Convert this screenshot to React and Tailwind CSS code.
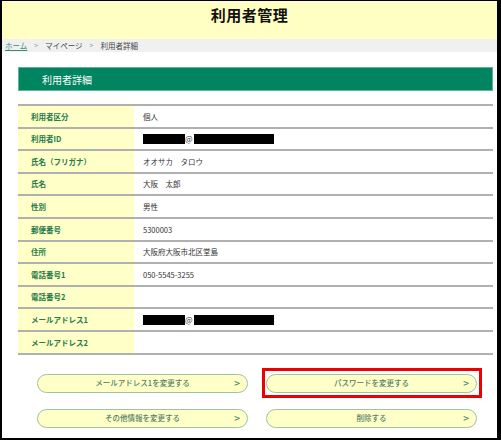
import React from 'react';

const rows = [
  { label: '利用者区分', value: '個人' },
  { label: '利用者ID', value: 'mask' },
  { label: '氏名（フリガナ）', value: 'オオサカ　タロウ' },
  { label: '氏名', value: '大阪　太郎' },
  { label: '性別', value: '男性' },
  { label: '郵便番号', value: '5300003' },
  { label: '住所', value: '大阪府大阪市北区堂島' },
  { label: '電話番号1', value: '050-5545-3255' },
  { label: '電話番号2', value: '' },
  { label: 'メールアドレス1', value: 'mask' },
  { label: 'メールアドレス2', value: '' },
];

const Masked = () => (
  <div className="flex items-center">
    <span className="w-[42px] h-[10px] bg-black"></span>
    <span className="text-[8px] text-[#333] leading-none">@</span>
    <span className="w-[80px] h-[10px] bg-black ml-[1px]"></span>
  </div>
);

const ActionButton = ({ label, marked }) => (
  <div className="relative w-[211px]">
    {marked && (
      <span className="absolute -left-[4px] -right-[5px] -top-[6px] -bottom-[5px] border-[3px] border-[#ee0000]"></span>
    )}
    <button className="relative w-full h-[19px] rounded-full bg-[#ffffc8] border border-[#9fc39f] flex items-center justify-center text-[7.5px] text-[#55806a] font-medium">
      {label}
      <span className="absolute right-[7px] top-1/2 -translate-y-1/2 text-[10px] text-[#3f7a55] font-medium leading-none">&gt;</span>
    </button>
  </div>
);

const App = () => {
  return (
    <div
      className="w-[501px] h-[440px] bg-white border-t border-l-2 border-r-4 border-b-2 border-black overflow-hidden"
      style={{ fontFamily: '"Noto Sans CJK JP", "Noto Sans", sans-serif' }}
    >
      <header className="h-[38px] bg-[#ffffc4] flex items-center justify-center">
        <h1 className="text-[15px] font-bold text-[#111] tracking-[0.5px] -mt-[9px]">利用者管理</h1>
      </header>

      <nav className="h-[13px] bg-[#f0f0f0] flex items-center gap-x-[7px] pl-[3px] text-[7.5px] text-[#444] leading-none">
        <a className="text-[#3d8a7d] underline">ホーム</a>
        <span className="text-[#999] text-[7px]">&gt;</span>
        <span>マイページ</span>
        <span className="text-[#999] text-[7px]">&gt;</span>
        <span>利用者詳細</span>
      </nav>

      <main className="w-[475px] ml-[16px] mt-[15px]">
        <div className="h-[24px] bg-[#008560] border border-[#5fb592] flex items-center pl-[23px]">
          <h2 className="text-[10px] text-white">利用者詳細</h2>
        </div>

        <div className="mt-[13px] border-t-2 border-[#b0b0b0]">
          {rows.map((row) => (
            <div key={row.label} className="h-[22.6px] flex border-b-2 border-[#b0b0b0]">
              <div className="w-[116px] bg-[#ffffc8] flex items-center pl-[13px] text-[7.5px] font-bold text-[#257a4c]">
                {row.label}
              </div>
              <div className="flex-1 flex items-center pl-[9px] text-[7.5px] text-[#333]">
                {row.value === 'mask' ? <Masked /> : row.value}
              </div>
            </div>
          ))}
        </div>

        <div className="grid grid-cols-[211px_211px] gap-x-[18px] gap-y-[16px] ml-[19px] mt-[19px]">
          <ActionButton label="メールアドレス1を変更する" />
          <ActionButton label="パスワードを変更する" marked />
          <ActionButton label="その他情報を変更する" />
          <ActionButton label="削除する" />
        </div>
      </main>
    </div>
  );
};

export default App;
